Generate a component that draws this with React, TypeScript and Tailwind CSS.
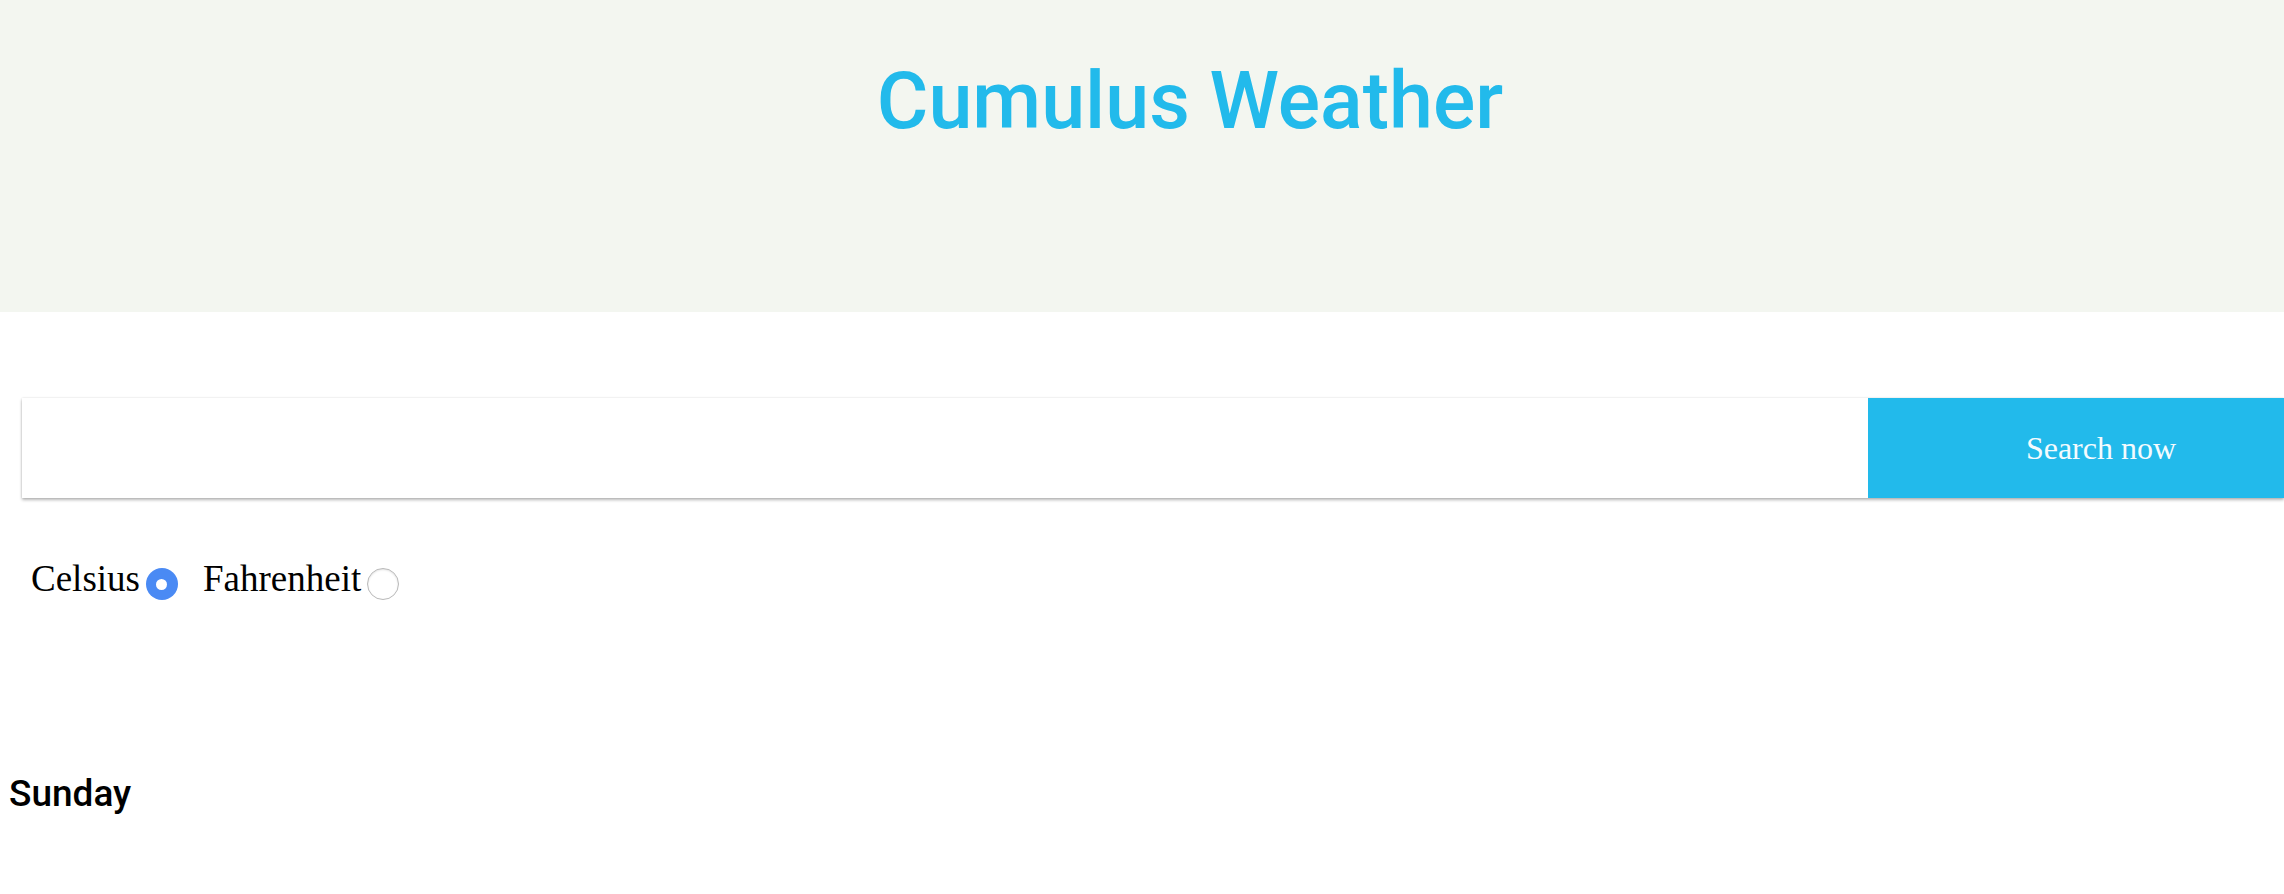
import { useState } from 'react';

const serif = { fontFamily: '"Liberation Serif", "DejaVu Serif", serif' };
const roboto = { fontFamily: 'Roboto, "Liberation Sans", sans-serif' };

function Radio({ checked, onClick }: { checked: boolean; onClick: () => void }) {
  return (
    <button
      type="button"
      onClick={onClick}
      className={
        checked
          ? 'mt-[9px] grid h-[32px] w-[32px] shrink-0 place-items-center rounded-full bg-[#4a8af4]'
          : 'mt-[9px] h-[32px] w-[32px] shrink-0 rounded-full border border-[#b9b9b9] bg-white shadow-[inset_0_1px_2px_rgba(0,0,0,0.12)]'
      }
    >
      {checked && <span className="block h-[11px] w-[11px] rounded-full bg-white" />}
    </button>
  );
}

export default function App() {
  const [unit, setUnit] = useState<'c' | 'f'>('c');
  return (
    <div className="min-h-screen overflow-hidden bg-white text-black">
      <header className="h-[312px] bg-[#f3f6f0] pl-[96px] pt-[55px] text-center">
        <h1 className="text-[79px] font-medium leading-[92px] text-[#22baeb]" style={roboto}>
          Cumulus Weather
        </h1>
      </header>

      <div className="mt-[86px] pl-[22px]">
        <div className="flex h-[100px] shadow-[0_2px_3px_rgba(0,0,0,0.28),0_0_2px_rgba(0,0,0,0.12)]">
          <input className="min-w-0 flex-1 bg-white px-4 text-[28px] outline-none" style={serif} />
          <button
            type="button"
            className="w-[416px] shrink-0 bg-[#22baeb] pl-[50px] text-center text-[32px] text-[#f4fbfe]"
            style={serif}
          >
            Search now
          </button>
        </div>
      </div>

      <div className="mt-[61px] flex items-start pl-[31px] text-[37px] leading-[40px]" style={serif}>
        <span>Celsius</span>
        <span className="ml-[6px]">
          <Radio checked={unit === 'c'} onClick={() => setUnit('c')} />
        </span>
        <span className="ml-[25px]">Fahrenheit</span>
        <span className="ml-[6px]">
          <Radio checked={unit === 'f'} onClick={() => setUnit('f')} />
        </span>
      </div>

      <h2 className="mt-[168px] pl-[9px] text-[37px] font-medium leading-[37px]" style={roboto}>
        Sunday
      </h2>
    </div>
  );
}
